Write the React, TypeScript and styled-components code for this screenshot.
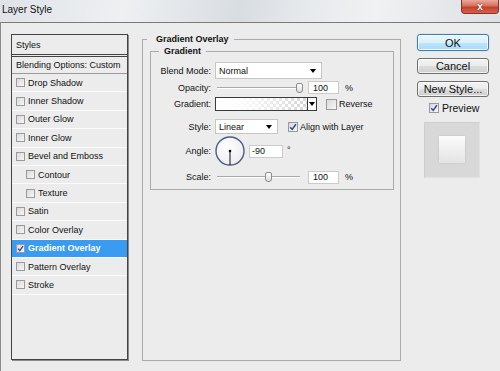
import React from "react";
import styled, { createGlobalStyle, css } from "styled-components";

const GlobalStyle = createGlobalStyle`
  html, body { margin: 0; padding: 0; }
  body {
    width: 500px; height: 371px; overflow: hidden; background: #ececec;
    font-family: "Liberation Sans", Arial, sans-serif;
  }
  * { box-sizing: border-box; }
`;

const Window = styled.div`
  width: 500px; height: 371px; display: flex; flex-direction: column; overflow: hidden;
`;

const TitleBar = styled.div`
  height: 22px; flex: none; display: flex; align-items: flex-start;
  background: linear-gradient(100deg, #dfe3e8 0%, #eef0f2 25%, #d8dde2 48%, #e6e9ec 60%, #f0f1f3 75%, #dde1e5 100%);
`;

const Title = styled.span`
  font-size: 10px; line-height: 12px; color: #111; padding: 4px 0 0 2px;
`;

const CloseButton = styled.div`
  margin-left: auto; margin-right: 1px; width: 38px; height: 14px;
  border: 1px solid #8a3325; border-top: none; border-radius: 0 0 4px 4px;
  background: linear-gradient(#e9a99c 0%, #d7705d 45%, #c4412b 55%, #d2634f 100%);
  color: #fff; font-size: 10px; font-weight: bold; line-height: 12px;
  display: flex; align-items: center; justify-content: center;
  text-shadow: 0 0 2px #5a1a10;
`;

const Body = styled.div`
  flex: 1; display: flex; align-items: flex-start;
  border-top: 1px solid #7b7b7b; border-left: 1px solid #8a8a8a; background: #ececec;
`;

/* ---------- left style list ---------- */
const StylePanel = styled.div`
  margin: 11px 0 0 10px; width: 117px; height: 326px; flex: none;
  border: 1px solid #444; box-shadow: 1px 1px 0 #8c8c8c;
  display: flex; flex-direction: column; font-size: 9px; color: #111;
`;

const PanelHeader = styled.div`
  height: 20px; padding-left: 4px; display: flex; align-items: center;
  border-bottom: 1px solid #444;
`;

const BlendRow = styled.div`
  margin-top: 1px; height: 18px; padding-left: 4px; display: flex; align-items: center;
  border-top: 1px solid #444; border-bottom: 1px solid #9a9a9a;
`;

const StyleRow = styled.div<{ $indent?: boolean; $active?: boolean }>`
  height: 18.4px; flex: none; display: flex; align-items: center; gap: 3px;
  padding-left: ${(p) => (p.$indent ? "14px" : "4px")};
  border-bottom: 1px solid #fbfbfb;
  ${(p) =>
    p.$active &&
    css`
      background: #3a9bf2; color: #fff; font-weight: bold;
    `}
`;

/* ---------- checkbox ---------- */
const Box = styled.span<{ $size: number }>`
  width: ${(p) => p.$size}px; height: ${(p) => p.$size}px; flex: none;
  border: 1px solid #9a9a9a; background: linear-gradient(135deg, #d9d9d9, #f7f7f7);
  display: inline-flex; align-items: center; justify-content: center;
`;

const Check = ({ checked = false, size = 9 }: { checked?: boolean; size?: number }) => (
  <Box $size={size}>
    {checked && (
      <svg width={size - 2} height={size - 2} viewBox="0 0 8 8">
        <path d="M1.2 4.2 L3.2 6.4 L6.9 1.2" fill="none" stroke="#34479a" strokeWidth="1.5" />
      </svg>
    )}
  </Box>
);

/* ---------- middle group ---------- */
const Group = styled.fieldset`
  margin: 10px 0 0 14px; padding: 0 7px; width: 259px; height: 328px; flex: none;
  border: 1px solid #ababab; min-width: 0;
`;

const GroupLegend = styled.legend`
  margin-left: -3px; padding: 0 5px 0 9px; font-size: 9px; font-weight: bold; line-height: 12px; color: #111;
`;

const SubGroup = styled.fieldset`
  margin: 0; padding: 0 0 5px 0; width: 244px; border: 1px solid #ababab; min-width: 0;
`;

const SubLegend = styled.legend`
  margin-left: 8px; padding: 0 5px; font-size: 9px; font-weight: bold; line-height: 12px; color: #111;
`;

const Row = styled.div<{ $h: number; $mt: number }>`
  height: ${(p) => p.$h}px; margin-top: ${(p) => p.$mt}px;
  display: grid; grid-template-columns: 60px 1fr; column-gap: 4px; align-items: center;
  font-size: 9px; color: #111;
`;

const Label = styled.span`
  text-align: right; white-space: nowrap;
`;

const Controls = styled.div`
  display: flex; align-items: center; height: 100%;
`;

const Select = styled.div<{ $w: number }>`
  width: ${(p) => p.$w}px; height: 100%; background: #fff; border: 1px solid #c6c6c6;
  display: flex; align-items: center; justify-content: space-between; padding: 0 5px 0 3px;
`;

const Arrow = styled.span`
  width: 0; height: 0; border-left: 3.5px solid transparent; border-right: 3.5px solid transparent;
  border-top: 4px solid #000;
`;

const Field = styled.div<{ $w: number; $pl?: number }>`
  width: ${(p) => p.$w}px; height: 13px; background: #fff; border: 1px solid #cbcbcb;
  padding-left: ${(p) => p.$pl ?? 3}px; display: flex; align-items: center; flex: none;
`;

const Unit = styled.span<{ $ml: number; $top?: boolean }>`
  margin-left: ${(p) => p.$ml}px;
  ${(p) => p.$top && css`align-self: flex-start; margin-top: 9px;`}
`;

const SliderWrap = styled.div`
  position: relative; width: 88px; height: 12px; margin-right: 5px; flex: none;
`;

const Track = styled.div`
  position: absolute; left: 2px; right: 3px; top: 5px; height: 2px;
  border-top: 1px solid #a9a9a9; border-bottom: 1px solid #fff;
`;

const Thumb = styled.div`
  position: absolute; top: 1px; width: 7px; height: 10px;
  border: 1px solid #8c8c8c; border-radius: 2px 2px 3px 3px;
  background: linear-gradient(#ffffff, #dcdcdc);
`;

const Slider = ({ pos }: { pos: number }) => (
  <SliderWrap>
    <Track />
    <Thumb style={{ left: Math.round(pos * 81) }} />
  </SliderWrap>
);

const GradientBox = styled.div`
  width: 102px; height: 14px; border: 1px solid #3a3a3a; display: flex; flex: none;
`;

const GradientFill = styled.div`
  flex: 1;
  background:
    linear-gradient(90deg, #ffffff 0%, rgba(255,255,255,0.9) 30%, rgba(255,255,255,0) 100%),
    repeating-conic-gradient(#d6d6d6 0% 25%, #ffffff 0% 50%) 0 0 / 6px 6px;
`;

const GradientDrop = styled.div`
  width: 9px; border-left: 1px solid #3a3a3a; background: #fff;
  display: flex; align-items: center; justify-content: center;
`;

const CheckLabel = styled.span<{ $ml: number }>`
  margin-left: ${(p) => p.$ml}px; display: flex; align-items: center; gap: 2px;
`;

const Dial = styled.svg`
  flex: none;
`;

/* ---------- right column ---------- */
const SideColumn = styled.div`
  margin: 11px 0 0 16px; width: 72px; flex: none; display: flex; flex-direction: column; align-items: stretch;
`;

const Button = styled.div<{ $primary?: boolean; $mt: number; $h: number }>`
  margin-top: ${(p) => p.$mt}px; height: ${(p) => p.$h}px; border-radius: 3px;
  border: 1px solid #707070; font-size: 11px; color: #111;
  display: flex; align-items: center; justify-content: center;
  background: linear-gradient(#f3f3f3 0%, #ebebeb 50%, #dddddd 51%, #cfcfcf 100%);
  box-shadow: inset 0 0 0 1px rgba(255,255,255,0.7);
  ${(p) =>
    p.$primary &&
    css`
      border-color: #3c7fb1;
      background: linear-gradient(#eaf6fd 0%, #d9f0fc 50%, #bee6fd 51%, #a7d9f5 100%);
      box-shadow: inset 0 0 0 1px rgba(255,255,255,0.8), 0 0 1px #5aa8e0;
    `}
`;

const PreviewToggle = styled.div`
  margin: 6px 0 0 12px; height: 10px; display: flex; align-items: center; gap: 3px;
  font-size: 10.5px; color: #111;
`;

const PreviewBox = styled.div`
  margin: 9px 0 0 7px; width: 56px; height: 56px;
  background: #d8d8d8; border: 1px solid #e2e2e2; border-top-color: #cfcfcf; border-left-color: #cfcfcf;
  display: flex; align-items: center; justify-content: center;
`;

const PreviewSwatch = styled.div`
  width: 26px; height: 27px; margin: 0 1px 1px 0;
  background: linear-gradient(#fbfbfb, #e4e4e4);
  box-shadow: 0 0 2px rgba(0,0,0,0.12);
`;

const styleItems: { name: string; indent?: boolean; checked?: boolean; active?: boolean }[] = [
  { name: "Drop Shadow" },
  { name: "Inner Shadow" },
  { name: "Outer Glow" },
  { name: "Inner Glow" },
  { name: "Bevel and Emboss" },
  { name: "Contour", indent: true },
  { name: "Texture", indent: true },
  { name: "Satin" },
  { name: "Color Overlay" },
  { name: "Gradient Overlay", checked: true, active: true },
  { name: "Pattern Overlay" },
  { name: "Stroke" },
];

export default function App() {
  return (
    <>
      <GlobalStyle />
      <Window>
        <TitleBar>
          <Title>Layer Style</Title>
          <CloseButton>x</CloseButton>
        </TitleBar>
        <Body>
          <StylePanel>
            <PanelHeader>Styles</PanelHeader>
            <BlendRow>Blending Options: Custom</BlendRow>
            {styleItems.map((it) => (
              <StyleRow key={it.name} $indent={it.indent} $active={it.active}>
                <Check checked={it.checked} size={9} />
                <span>{it.name}</span>
              </StyleRow>
            ))}
          </StylePanel>

          <Group>
            <GroupLegend>Gradient Overlay</GroupLegend>
            <SubGroup>
              <SubLegend>Gradient</SubLegend>
              <Row $h={17} $mt={5}>
                <Label>Blend Mode:</Label>
                <Controls>
                  <Select $w={107}>
                    <span>Normal</span>
                    <Arrow />
                  </Select>
                </Controls>
              </Row>
              <Row $h={13} $mt={2}>
                <Label>Opacity:</Label>
                <Controls>
                  <Slider pos={1} />
                  <Field $w={31} $pl={4}>100</Field>
                  <Unit $ml={6}>%</Unit>
                </Controls>
              </Row>
              <Row $h={14} $mt={3}>
                <Label>Gradient:</Label>
                <Controls>
                  <GradientBox>
                    <GradientFill />
                    <GradientDrop>
                      <Arrow />
                    </GradientDrop>
                  </GradientBox>
                  <CheckLabel $ml={9}>
                    <Check size={11} />
                    <span>Reverse</span>
                  </CheckLabel>
                </Controls>
              </Row>
              <Row $h={15} $mt={8}>
                <Label>Style:</Label>
                <Controls>
                  <Select $w={63}>
                    <span>Linear</span>
                    <Arrow />
                  </Select>
                  <CheckLabel $ml={10}>
                    <Check checked size={10} />
                    <span>Align with Layer</span>
                  </CheckLabel>
                </Controls>
              </Row>
              <Row $h={30} $mt={2}>
                <Label>Angle:</Label>
                <Controls>
                  <Dial width="30" height="30" viewBox="0 0 30 30">
                    <defs>
                      <radialGradient id="dialFill" cx="0.4" cy="0.35" r="0.7">
                        <stop offset="0" stopColor="#ffffff" />
                        <stop offset="1" stopColor="#ececf0" />
                      </radialGradient>
                    </defs>
                    <circle cx="15" cy="15" r="14" fill="url(#dialFill)" stroke="#4d5d7e" strokeWidth="1.4" />
                    <line x1="15" y1="15" x2="15" y2="29" stroke="#111" strokeWidth="1" />
                    <circle cx="15" cy="15" r="1.3" fill="#000" />
                  </Dial>
                  <Field $w={34} $pl={2} style={{ marginLeft: 4 }}>-90</Field>
                  <Unit $ml={4} $top>°</Unit>
                </Controls>
              </Row>
              <Row $h={14} $mt={4}>
                <Label>Scale:</Label>
                <Controls>
                  <Slider pos={50 / 81} />
                  <Field $w={31} $pl={4}>100</Field>
                  <Unit $ml={6}>%</Unit>
                </Controls>
              </Row>
            </SubGroup>
          </Group>

          <SideColumn>
            <Button $primary $mt={0} $h={17}>OK</Button>
            <Button $mt={7} $h={16}>Cancel</Button>
            <Button $mt={7} $h={16}>New Style...</Button>
            <PreviewToggle>
              <Check checked size={10} />
              <span>Preview</span>
            </PreviewToggle>
            <PreviewBox>
              <PreviewSwatch />
            </PreviewBox>
          </SideColumn>
        </Body>
      </Window>
    </>
  );
}
